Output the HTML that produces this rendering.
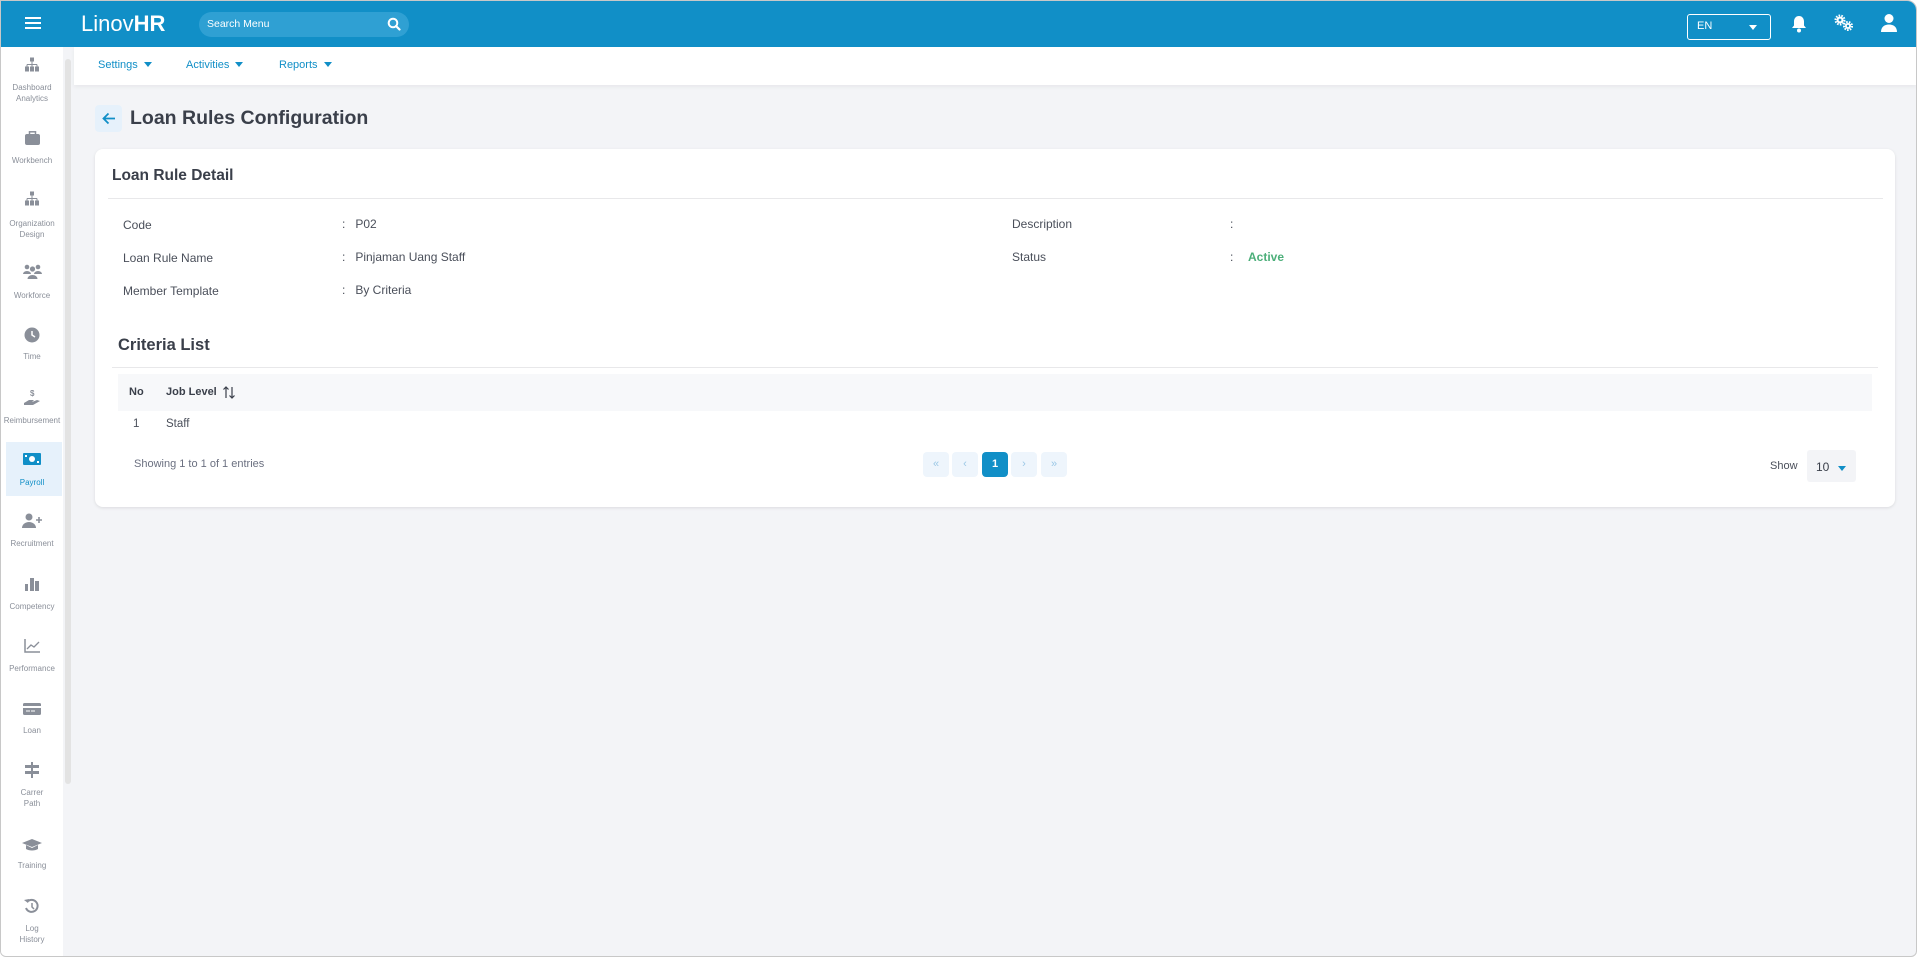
<!DOCTYPE html>
<html><head><meta charset="utf-8"><style>
*{box-sizing:border-box;margin:0;padding:0}
body{width:1920px;height:961px;background:#fff;font-family:"Liberation Sans",sans-serif;position:relative;overflow:hidden;color:#3d4250}
.frame{position:absolute;left:0;top:0;width:1917px;height:957px;border:1px solid #c8c8c8;border-radius:0 10px 6px 6px;background:#f3f4f7;overflow:hidden}
.hdr{position:absolute;left:0;top:0;width:100%;height:46px;background:#118fc7}
.a{position:absolute;white-space:nowrap}
.side{position:absolute;left:0;top:46px;width:62px;height:911px;background:#fff}
.sbar{position:absolute;left:64px;top:58px;width:6px;height:725px;background:#e3e3e3;border-radius:3px}
.ic{position:absolute;left:0;width:62px;text-align:center;line-height:0}
.sl{position:absolute;left:0;width:62px;text-align:center;font-size:8px;color:#8a8f99;line-height:11px}
.sub{position:absolute;left:73px;top:46px;right:0;height:38px;background:#fff;box-shadow:0 2px 4px rgba(0,0,0,.05)}
.nav{position:absolute;top:58px;font-size:11px;color:#118fc7}
.tri{display:inline-block;width:0;height:0;border-left:4px solid transparent;border-right:4px solid transparent;border-top:5px solid #118fc7;margin-left:6px;vertical-align:1px}
.card{position:absolute;left:94px;top:148px;width:1800px;height:358px;background:#fff;border-radius:8px;box-shadow:0 1px 3px rgba(0,0,0,.1)}
.lbl{font-size:12px;color:#4a4f5a}
.pg{position:absolute;top:451px;width:26px;height:25px;border-radius:4px;background:#eef5fc;color:#9cc8e6;font-size:11px;text-align:center;line-height:25px}
</style></head><body>
<div class="frame">
<div class="hdr">
 <div class="a" style="left:24px;top:16px;width:16px;height:2px;background:#fff;box-shadow:0 5px 0 #fff,0 10px 0 #fff"></div>
 <div class="a" style="left:80px;top:10px;font-size:22px;color:#fff;font-weight:normal">Linov<b>HR</b></div>
 <div class="a" style="left:198px;top:11px;width:210px;height:25px;border-radius:13px;background:#2fa0d3"></div>
 <div class="a" style="left:206px;top:17px;font-size:10.5px;color:#fff">Search Menu</div>
 <svg class="a" style="left:386px;top:16px" width="14" height="14" viewBox="0 0 14 14"><circle cx="6" cy="6" r="4.3" fill="none" stroke="#fff" stroke-width="2"/><path d="M9 9l3.5 3.5" stroke="#fff" stroke-width="2.2" stroke-linecap="round"/></svg>
 <div class="a" style="left:1686px;top:13px;width:84px;height:26px;border:1px solid #fff;border-radius:3px"></div>
 <div class="a" style="left:1696px;top:19px;font-size:11px;color:#fff">EN</div>
 <div class="a" style="left:1748px;top:24px;border-left:4px solid transparent;border-right:4px solid transparent;border-top:5px solid #fff"></div>
 <svg class="a" style="left:1790px;top:14px" width="16" height="18" viewBox="0 0 16 18"><path d="M8 1c-3 0-5 2.4-5 5.5v4L1 13h14l-2-2.5v-4C13 3.4 11 1 8 1z" fill="#fff"/><circle cx="8" cy="15.5" r="2" fill="#fff"/></svg>
 <svg class="a" style="left:1832px;top:13px" width="22" height="18" viewBox="0 0 22 18"><circle cx="7" cy="6" r="3.5" fill="#fff"/><circle cx="7" cy="6" r="4.5" fill="none" stroke="#fff" stroke-width="2" stroke-dasharray="1.6 1.2"/><circle cx="7" cy="6" r="1.4" fill="#118fc7"/><circle cx="15" cy="12" r="3" fill="#fff"/><circle cx="15" cy="12" r="4" fill="none" stroke="#fff" stroke-width="2" stroke-dasharray="1.6 1.2"/><circle cx="15" cy="12" r="1.2" fill="#118fc7"/></svg>
 <svg class="a" style="left:1879px;top:12px" width="18" height="20" viewBox="0 0 18 20"><circle cx="9" cy="5.5" r="4.5" fill="#fff"/><path d="M1 19c0-5 3.5-7.5 8-7.5s8 2.5 8 7.5z" fill="#fff"/></svg>
</div>
<div class="side">
 <div class="a" style="top:395px;left:5px;width:56px;height:54px;background:#e6f1fb"></div>
</div>
<div class="sbar"></div>

<div class="ic" style="top:56px"><svg width="16" height="15" viewBox="0 0 16 14"><rect x="6" y="0" width="4" height="4" fill="#8a8f99"/><path d="M8 4v3M3 7h10M3 7v2M13 7v2M8 7v2" stroke="#8a8f99"/><rect x="1" y="9" width="4" height="5" fill="#8a8f99"/><rect x="6" y="9" width="4" height="5" fill="#8a8f99"/><rect x="11" y="9" width="4" height="5" fill="#8a8f99"/></svg></div>
<div class="sl" style="top:81px">Dashboard<br>Analytics</div>
<div class="ic" style="top:130px"><svg width="17" height="15"><rect x="1" y="3" width="15" height="11" rx="2" fill="#8a8f99"/><rect x="5.5" y="0.8" width="6" height="3" fill="none" stroke="#8a8f99" stroke-width="1.5"/></svg></div>
<div class="sl" style="top:154px">Workbench</div>
<div class="ic" style="top:190px"><svg width="16" height="15" viewBox="0 0 16 14"><rect x="6" y="0" width="4" height="4" fill="#8a8f99"/><path d="M8 4v3M3 7h10M3 7v2M13 7v2M8 7v2" stroke="#8a8f99"/><rect x="1" y="9" width="4" height="5" fill="#8a8f99"/><rect x="6" y="9" width="4" height="5" fill="#8a8f99"/><rect x="11" y="9" width="4" height="5" fill="#8a8f99"/></svg></div>
<div class="sl" style="top:217px">Organization<br>Design</div>
<div class="ic" style="top:263px"><svg width="19" height="15"><circle cx="4" cy="3" r="2.3" fill="#8a8f99"/><circle cx="15" cy="3" r="2.3" fill="#8a8f99"/><circle cx="9.5" cy="5" r="2.6" fill="#8a8f99"/><path d="M0 10a4 3 0 018 0zM11 10a4 3 0 018 0zM4.5 15a5 4 0 0110 0z" fill="#8a8f99"/></svg></div>
<div class="sl" style="top:289px">Workforce</div>
<div class="ic" style="top:326px"><svg width="16" height="16"><circle cx="8" cy="8" r="7.5" fill="#8a8f99"/><path d="M8 4v4l3 2" stroke="#fff" stroke-width="1.5" fill="none"/></svg></div>
<div class="sl" style="top:350px">Time</div>
<div class="ic" style="top:388px"><svg width="18" height="17"><text x="7" y="7" font-size="8" fill="#8a8f99" font-family="Liberation Sans" font-weight="bold">$</text><path d="M1 14l5-3h5l-2 2 5-2 3 1-7 4H1z" fill="#8a8f99"/></svg></div>
<div class="sl" style="top:414px">Reimbursement</div>
<div class="ic" style="top:451px"><svg width="18" height="14"><rect x="0" y="1" width="18" height="12" rx="1" fill="#118fc7"/><circle cx="9" cy="7" r="3" fill="#fff"/><rect x="2" y="3" width="2" height="2" fill="#fff"/><rect x="14" y="9" width="2" height="2" fill="#fff"/></svg></div>
<div class="sl" style="top:476px;color:#118fc7">Payroll</div>
<div class="ic" style="top:512px"><svg width="20" height="16"><circle cx="7" cy="4" r="3.5" fill="#8a8f99"/><path d="M0 15a7 6 0 0114 0z" fill="#8a8f99"/><path d="M17 4v6M14 7h6" stroke="#8a8f99" stroke-width="1.6"/></svg></div>
<div class="sl" style="top:537px">Recruitment</div>
<div class="ic" style="top:576px"><svg width="14" height="14"><rect x="0" y="7" width="3" height="7" fill="#8a8f99"/><rect x="5" y="1" width="4" height="13" fill="#8a8f99"/><rect x="10" y="4" width="4" height="10" fill="#8a8f99"/></svg></div>
<div class="sl" style="top:600px">Competency</div>
<div class="ic" style="top:638px"><svg width="16" height="14"><path d="M1 0v13h15" stroke="#8a8f99" stroke-width="1.5" fill="none"/><path d="M3 10l4-4 3 2 5-5" stroke="#8a8f99" stroke-width="1.3" fill="none"/></svg></div>
<div class="sl" style="top:662px">Performance</div>
<div class="ic" style="top:701px"><svg width="18" height="14"><rect x="0" y="1" width="18" height="12" rx="1.5" fill="#8a8f99"/><rect x="0" y="4" width="18" height="2" fill="#fff"/><path d="M3 9h4M8 9h4" stroke="#fff"/></svg></div>
<div class="sl" style="top:724px">Loan</div>
<div class="ic" style="top:761px"><svg width="16" height="16"><rect x="1" y="3" width="14" height="3" fill="#8a8f99"/><rect x="1" y="9" width="14" height="3" fill="#8a8f99"/><rect x="7" y="0" width="2" height="16" fill="#8a8f99"/></svg></div>
<div class="sl" style="top:786px">Carrer<br>Path</div>
<div class="ic" style="top:837px"><svg width="20" height="14"><path d="M0 5l10-4 10 4-10 4z" fill="#8a8f99"/><path d="M4 7v4c3 2 9 2 12 0V7l-6 3z" fill="#8a8f99"/></svg></div>
<div class="sl" style="top:859px">Training</div>
<div class="ic" style="top:897px"><svg width="16" height="16"><path d="M3 4a6 6 0 11-1 6" stroke="#8a8f99" stroke-width="2" fill="none"/><path d="M0 2l4 3 1-4z" fill="#8a8f99"/><path d="M8 5v4l2 2" stroke="#8a8f99" stroke-width="1.5" fill="none"/></svg></div>
<div class="sl" style="top:922px">Log<br>History</div>

<div class="sub"></div>
<div class="nav" style="left:97px">Settings<span class="tri"></span></div>
<div class="nav" style="left:185px">Activities<span class="tri"></span></div>
<div class="nav" style="left:278px">Reports<span class="tri"></span></div>

<div class="a" style="left:94px;top:104px;width:27px;height:27px;border-radius:4px;background:#e6f1fb"></div>
<svg class="a" style="left:101px;top:111px" width="14" height="13" viewBox="0 0 14 13"><path d="M13 6.5H2M6.5 1.5L1.5 6.5l5 5" stroke="#118fc7" stroke-width="1.8" fill="none"/></svg>
<div class="a" style="left:129px;top:106px;font-size:19.5px;font-weight:bold;color:#3a3f4a">Loan Rules Configuration</div>

<div class="card"></div>
<div class="a" style="left:111px;top:166px;font-size:15.5px;font-weight:bold;color:#3a3f4a">Loan Rule Detail</div>
<div class="a" style="left:107px;top:197px;width:1775px;height:1px;background:#e8e8ea"></div>
<div class="a lbl" style="left:122px;top:217px">Code</div>
<div class="a lbl" style="left:341px;top:216px">:&nbsp;&nbsp;&nbsp;P02</div>
<div class="a lbl" style="left:122px;top:250px">Loan Rule Name</div>
<div class="a lbl" style="left:341px;top:249px">:&nbsp;&nbsp;&nbsp;Pinjaman Uang Staff</div>
<div class="a lbl" style="left:122px;top:283px">Member Template</div>
<div class="a lbl" style="left:341px;top:282px">:&nbsp;&nbsp;&nbsp;By Criteria</div>
<div class="a lbl" style="left:1011px;top:216px">Description</div>
<div class="a lbl" style="left:1229px;top:216px">:</div>
<div class="a lbl" style="left:1011px;top:249px">Status</div>
<div class="a lbl" style="left:1229px;top:249px">:</div>
<div class="a" style="left:1247px;top:249px;font-size:12px;font-weight:bold;color:#4caf7a">Active</div>

<div class="a" style="left:117px;top:335px;font-size:16.5px;font-weight:bold;color:#3a3f4a">Criteria List</div>
<div class="a" style="left:111px;top:366px;width:1766px;height:1px;background:#e8e8ea"></div>
<div class="a" style="left:117px;top:373px;width:1754px;height:37px;background:#f7f8fa"></div>
<div class="a" style="left:128px;top:385px;font-size:11px;font-weight:bold;color:#3a3f4a">No</div>
<div class="a" style="left:165px;top:385px;font-size:11px;font-weight:bold;color:#3a3f4a">Job Level</div>
<svg class="a" style="left:222px;top:385px" width="12" height="13" viewBox="0 0 12 13"><path d="M3 12V1M0.5 3.5L3 1l2.5 2.5M9 1v11M6.5 9.5L9 12l2.5-2.5" stroke="#3a3f4a" stroke-width="1.2" fill="none"/></svg>
<div class="a" style="left:132px;top:417px;font-size:11.5px;color:#4a4f5a">1</div>
<div class="a" style="left:165px;top:417px;font-size:11.5px;color:#4a4f5a">Staff</div>
<div class="a" style="left:133px;top:457px;font-size:11px;color:#6b7080">Showing 1 to 1 of 1 entries</div>

<div class="pg" style="left:922px">«</div>
<div class="pg" style="left:951px">‹</div>
<div class="pg" style="left:981px;background:#118fc7;color:#fff;font-weight:bold">1</div>
<div class="pg" style="left:1010px">›</div>
<div class="pg" style="left:1040px">»</div>
<div class="a" style="left:1769px;top:459px;font-size:11px;color:#4a4f5a">Show</div>
<div class="a" style="left:1806px;top:449px;width:49px;height:32px;border-radius:3px;background:#f3f4f7"></div>
<div class="a" style="left:1815px;top:459px;font-size:12px;color:#3a3f4a">10</div>
<div class="a" style="left:1837px;top:465px;border-left:4px solid transparent;border-right:4px solid transparent;border-top:5px solid #118fc7"></div>
</div>
</body></html>
